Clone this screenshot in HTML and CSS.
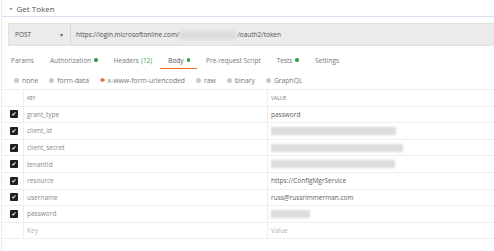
FILE: index.html
```html
<!DOCTYPE html>
<html lang="en">
<head>
  <meta charset="UTF-8">
  <title>Get Token</title>
  <link rel="stylesheet" href="styles.css">
</head>
<body>
  <div class="panel">
    <div class="req-head">
      <span class="caret">&#9656;</span>
      <span class="req-name">Get Token</span>
    </div>

    <div class="url-bar">
      <div class="method">
        <span>POST</span>
        <span class="drop">&#9662;</span>
      </div>
      <div class="url">
        <span>https://login.microsoftonline.com/</span>
        <span class="blur blur-url"></span>
        <span>/oauth2/token</span>
      </div>
    </div>

    <div class="tabs">
      <span class="tab">Params</span>
      <span class="tab">Authorization <i class="dot"></i></span>
      <span class="tab">Headers <em class="count">(12)</em></span>
      <span class="tab active">Body <i class="dot"></i></span>
      <span class="tab">Pre-request Script</span>
      <span class="tab">Tests <i class="dot"></i></span>
      <span class="tab">Settings</span>
    </div>

    <div class="body-types">
      <span class="opt"><i class="radio"></i>none</span>
      <span class="opt"><i class="radio"></i>form-data</span>
      <span class="opt"><i class="radio on"></i>x-www-form-urlencoded</span>
      <span class="opt"><i class="radio"></i>raw</span>
      <span class="opt"><i class="radio"></i>binary</span>
      <span class="opt"><i class="radio"></i>GraphQL</span>
    </div>

    <div class="kv">
      <div class="row head">
        <div class="cell chk"></div>
        <div class="cell">KEY</div>
        <div class="cell">VALUE</div>
      </div>
      <div class="row">
        <div class="cell chk"><span class="box">&#10004;</span></div>
        <div class="cell">grant_type</div>
        <div class="cell val">password</div>
      </div>
      <div class="row">
        <div class="cell chk"><span class="box">&#10004;</span></div>
        <div class="cell">client_id</div>
        <div class="cell val"><span class="blur" style="width:125px"></span></div>
      </div>
      <div class="row">
        <div class="cell chk"><span class="box">&#10004;</span></div>
        <div class="cell">client_secret</div>
        <div class="cell val"><span class="blur" style="width:132px"></span></div>
      </div>
      <div class="row">
        <div class="cell chk"><span class="box">&#10004;</span></div>
        <div class="cell">tenantId</div>
        <div class="cell val"><span class="blur" style="width:124px"></span></div>
      </div>
      <div class="row">
        <div class="cell chk"><span class="box">&#10004;</span></div>
        <div class="cell">resource</div>
        <div class="cell val">https://ConfigMgrService</div>
      </div>
      <div class="row">
        <div class="cell chk"><span class="box">&#10004;</span></div>
        <div class="cell">username</div>
        <div class="cell val">russ@russrimmerman.com</div>
      </div>
      <div class="row">
        <div class="cell chk"><span class="box">&#10004;</span></div>
        <div class="cell">password</div>
        <div class="cell val"><span class="blur" style="width:39px"></span></div>
      </div>
      <div class="row ph">
        <div class="cell chk"></div>
        <div class="cell">Key</div>
        <div class="cell">Value</div>
      </div>
    </div>
  </div>
</body>
</html>
```

FILE: styles.css
```css
body {
  margin: 0;
  background: #fff;
  font-family: "Open Sans", "DejaVu Sans", sans-serif;
  color: #707070;
  font-size: 7px;
  overflow: hidden;
}

.panel {
  border-left: 1px solid #ececec;
  margin-left: 1px;
  height: 251px;
}

.req-head {
  height: 16px;
  display: flex;
  align-items: center;
  border-bottom: 1px solid #d6e2f2;
  padding-left: 8px;
  color: #505050;
}
.caret {
  font-size: 5px;
  margin-right: 4px;
  color: #777;
}
.req-name {
  font-size: 8px;
}

.url-bar {
  display: flex;
  height: 21px;
  margin: 6px 0 0 6px;
  background: #ebebeb;
  border: 1px solid #e2e2e2;
  border-right: none;
  color: #505050;
}
.method {
  width: 48px;
  display: flex;
  align-items: center;
  justify-content: space-between;
  padding: 0 7px 0 6px;
  border-right: 1px solid #dadada;
  font-size: 6.5px;
}
.drop {
  font-size: 6px;
  color: #666;
}
.url {
  display: flex;
  align-items: center;
  padding-left: 5px;
  font-size: 6.5px;
}
.blur {
  display: inline-block;
  height: 8px;
  background: #dcdcdc;
  filter: blur(1.2px);
}
.blur-url {
  width: 56px;
  margin: 0 1px;
}

.tabs {
  display: flex;
  height: 22px;
  margin-top: 3px;
  align-items: center;
  padding-left: 9px;
}
.tab {
  position: relative;
  display: flex;
  align-items: center;
  margin-right: 16px;
  color: #787878;
  font-size: 6.5px;
}
.tab.active {
  color: #505050;
}
.tab.active::after {
  content: "";
  position: absolute;
  left: -8px;
  right: -7px;
  bottom: -4px;
  height: 1px;
  background: #f06a35;
}
.dot {
  display: inline-block;
  width: 3.5px;
  height: 3.5px;
  border-radius: 50%;
  background: #2e9e48;
  margin-left: 3px;
}
.count {
  font-style: normal;
  color: #3aa04f;
  margin-left: 2px;
}

.body-types {
  display: flex;
  align-items: center;
  height: 18px;
  padding-left: 12px;
  border-bottom: 1px solid #eeeeee;
}
.opt {
  display: flex;
  align-items: center;
  margin-right: 11px;
  font-size: 6.8px;
  color: #787878;
}
.radio {
  display: inline-block;
  width: 5px;
  height: 5px;
  border-radius: 50%;
  background: #c9c9c9;
  margin-right: 3px;
}
.radio.on {
  border: 1.5px solid #f4a58a;
  width: 2.5px;
  height: 2.5px;
  background: #e8643a;
}

.kv {
  display: grid;
}
.row {
  display: grid;
  grid-template-columns: 21px 244px 1fr;
  height: 16.6px;
  border-bottom: 1px solid #eeeeee;
  box-sizing: border-box;
}
.cell {
  display: flex;
  align-items: center;
  padding-left: 3px;
  font-size: 6.5px;
  color: #8a8a8a;
  border-left: 1px solid #eeeeee;
}
.cell.chk {
  border-left: none;
  justify-content: center;
  padding-left: 3px;
}
.cell.val {
  color: #606060;
}
.row.head .cell {
  font-size: 5px;
  color: #777;
}
.row.ph .cell {
  color: #b5b5b5;
}
.box {
  width: 8px;
  height: 8px;
  background: #1e1e1e;
  color: #fff;
  border-radius: 1px;
  font-size: 6px;
  line-height: 8px;
  text-align: center;
}
```
